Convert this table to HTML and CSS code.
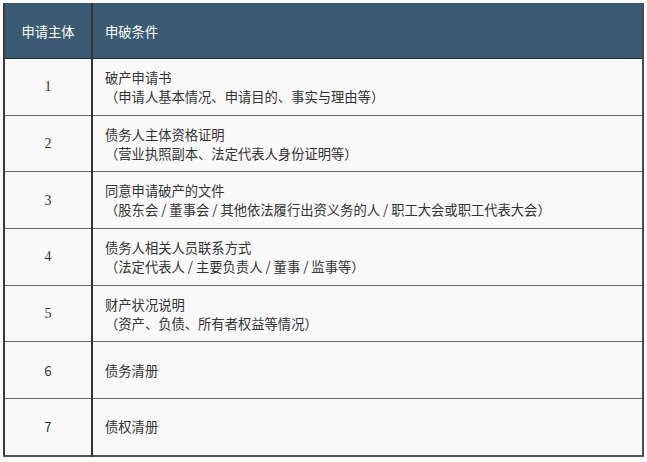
FILE: index.html
```html
<!DOCTYPE html>
<html lang="zh-CN">
<head>
<meta charset="utf-8">
<title>申破条件</title>
<link rel="stylesheet" href="styles.css">
</head>
<body>
<table class="req-table">
  <thead>
    <tr class="head-row">
      <th class="col-no">申请主体</th>
      <th class="col-desc">申破条件</th>
    </tr>
  </thead>
  <tbody>
    <tr>
      <td class="col-no num-serif">1</td>
      <td class="col-desc">破产申请书<br>（申请人基本情况、申请目的、事实与理由等）</td>
    </tr>
    <tr>
      <td class="col-no num-serif">2</td>
      <td class="col-desc">债务人主体资格证明<br>（营业执照副本、法定代表人身份证明等）</td>
    </tr>
    <tr>
      <td class="col-no num-serif">3</td>
      <td class="col-desc">同意申请破产的文件<br>（股东会 / 董事会 / 其他依法履行出资义务的人 / 职工大会或职工代表大会）</td>
    </tr>
    <tr>
      <td class="col-no num-serif">4</td>
      <td class="col-desc">债务人相关人员联系方式<br>（法定代表人 / 主要负责人 / 董事 / 监事等）</td>
    </tr>
    <tr>
      <td class="col-no num-serif">5</td>
      <td class="col-desc">财产状况说明<br>（资产、负债、所有者权益等情况）</td>
    </tr>
    <tr>
      <td class="col-no">6</td>
      <td class="col-desc">债务清册</td>
    </tr>
    <tr>
      <td class="col-no">7</td>
      <td class="col-desc">债权清册</td>
    </tr>
  </tbody>
</table>
</body>
</html>
```
FILE: styles.css
```css
html, body {
  margin: 0;
  padding: 0;
  background: #fafafa;
}
body {
  padding: 3px 0 0 3px;
  font-family: "Noto Sans CJK SC", "Noto Sans", sans-serif;
  font-size: 13.3px;
  color: #333;
}
.req-table {
  width: 641px;
  border-collapse: collapse;
  background: #f9f9f9;
  border-left: 2px solid #3a3a3a;
  border-right: 2px solid #4a4a4a;
  border-bottom: 2px solid #555;
}
.head-row th {
  height: 54px;
  padding: 0;
  background: #3a5b71;
  color: #ffffff;
  font-weight: normal;
  font-size: 13.3px;
  border-bottom: 1px solid #1f2f3a;
  border-top: 1px solid #3a5b71;
}
.req-table td {
  height: 55.7px;
  padding: 0;
  line-height: 19px;
  border-top: 1px solid #6a6a6a;
}
.req-table tbody tr:first-child td {
  border-top: none;
}
.col-no {
  width: 86px;
  text-align: center;
  border-right: 2px solid #333;
}
.col-desc {
  text-align: left;
  padding-left: 12px !important;
}
.num-serif {
  font-family: "Liberation Serif", "Noto Sans CJK SC", serif;
  font-size: 14px;
}
```
